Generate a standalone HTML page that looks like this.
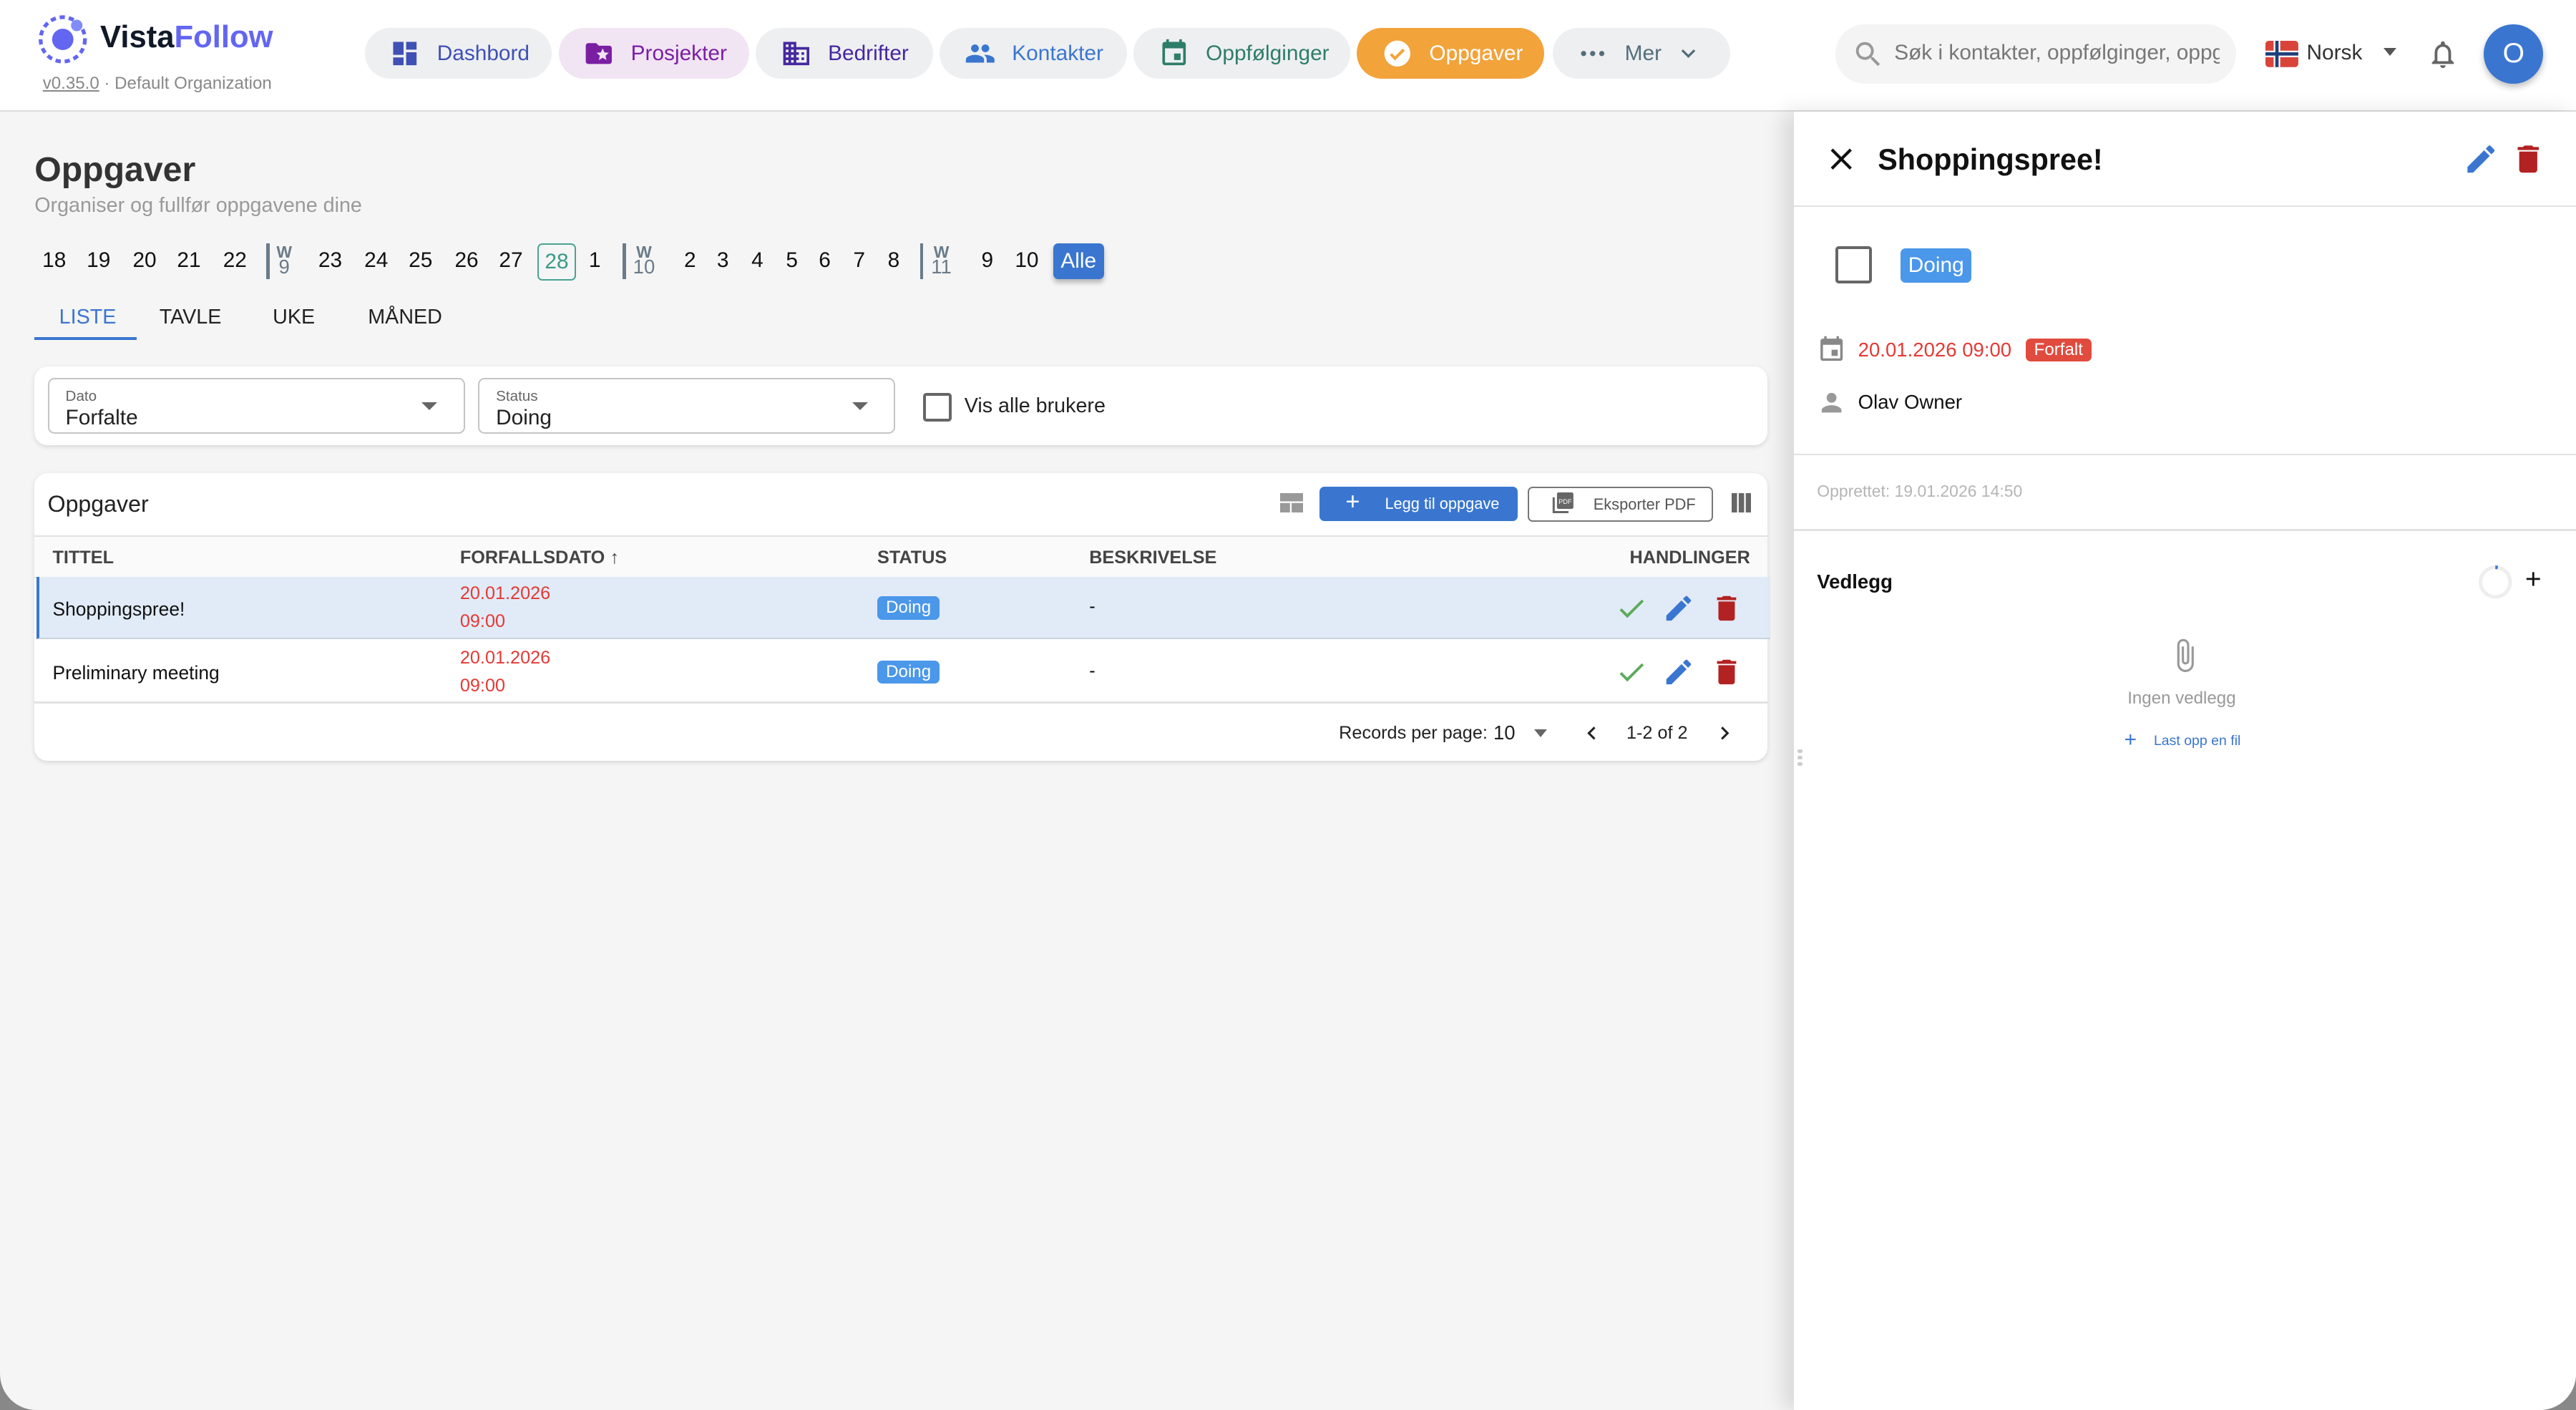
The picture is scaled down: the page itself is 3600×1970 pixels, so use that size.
<!DOCTYPE html>
<html><head><meta charset="utf-8">
<style>
html{zoom:2.29592}
body{margin:0;width:1568px;height:858px;background:#888;overflow:hidden;font-family:"Liberation Sans",Arial,sans-serif;}
#root{position:relative;width:1568px;height:858px;background:#f5f5f5;border-radius:0 0 22px 22px;overflow:hidden}
.a{position:absolute}
.hdr{left:0;top:0;width:1568px;height:67px;background:#fff;border-bottom:1px solid #ddd}
.pill{position:absolute;top:17px;height:31px;border-radius:16px;background:#eeeff1;display:flex;align-items:center;font-size:13px}
.pill svg{width:19px;height:19px;margin:0 10px 0 15px}
.c{transform:translateX(-50%);font-size:13px;color:#111;top:151px}
.w{transform:translateX(-50%);color:#6a7b89;font-size:10px;line-height:9px;text-align:center;top:149px;font-weight:bold}
.sep{top:148px;width:2px;height:22px;background:#6a7b89}
.card{background:#fff;border-radius:8px;box-shadow:0 1px 3px rgba(0,0,0,.12)}
.sel{top:230px;height:34px;width:254px;border:1px solid #c4c4c4;border-radius:4px;background:#fff;box-sizing:border-box}
.sel .l{position:absolute;left:10px;top:5px;font-size:9px;color:#666}
.sel .v{position:absolute;left:10px;top:16px;font-size:13px;color:#222}
.sel .ar{position:absolute;right:16px;top:14px;width:0;height:0;border-left:5px solid transparent;border-right:5px solid transparent;border-top:5px solid #666}
.th{top:333px;font-size:11px;font-weight:bold;color:#444}
.badge{position:absolute;left:534px;width:38px;height:14px;background:#4b97ea;color:#fff;font-size:10.5px;border-radius:3px;text-align:center;line-height:14px}
.red{color:#e53935;font-size:11px}
.hl{left:1092px;height:1px;width:476px;background:#e2e2e2}
</style></head><body><div id="root">
<div class="a hdr"></div>
<svg class="a" style="left:22px;top:7px" width="34" height="34" viewBox="0 0 34 34"><circle cx="16" cy="17" r="13.5" fill="none" stroke="#6366f1" stroke-width="2.3" stroke-dasharray="3.2 2.4"/><circle cx="16" cy="17" r="6.5" fill="#6366f1"/><circle cx="24.5" cy="8.5" r="3.5" fill="#818cf8"/></svg>
<div class="a" style="left:61px;top:12px;font-size:19px;font-weight:bold;color:#111827">Vista<span style="color:#6366f1">Follow</span></div>
<div class="a" style="left:26px;top:45px;font-size:10.5px;color:#888"><span style="text-decoration:underline">v0.35.0</span> · Default Organization</div>

<div class="pill" style="left:222px;width:114px;color:#3f51b5"><svg viewBox="0 0 24 24" fill="#3f51b5"><path d="M3 13h8V3H3v10zm0 8h8v-6H3v6zm10 0h8V11h-8v10zm0-18v6h8V3h-8z"/></svg>Dashbord</div>
<div class="pill" style="left:340px;width:116px;background:#f1e4f3;color:#7b1fa2"><svg viewBox="0 0 24 24" fill="#7b1fa2"><path d="M20 6h-8l-2-2H4c-1.1 0-2 .9-2 2v12c0 1.1.9 2 2 2h16c1.1 0 2-.9 2-2V8c0-1.1-.9-2-2-2zm-2.06 11L15 15.280 12.06 17l.78-3.33-2.59-2.24 3.41-.29L15 8l1.34 3.14 3.41.29-2.59 2.24.78 3.33z"/></svg>Prosjekter</div>
<div class="pill" style="left:460px;width:108px;color:#4527a0"><svg viewBox="0 0 24 24" fill="#4527a0"><path d="M12 7V3H2v18h20V7H12zM6 19H4v-2h2v2zm0-4H4v-2h2v2zm0-4H4V9h2v2zm0-4H4V5h2v2zm4 12H8v-2h2v2zm0-4H8v-2h2v2zm0-4H8V9h2v2zm0-4H8V5h2v2zm10 12h-8v-2h2v-2h-2v-2h2v-2h-2V9h8v10zm-2-8h-2v2h2v-2zm0 4h-2v2h2v-2z"/></svg>Bedrifter</div>
<div class="pill" style="left:572px;width:114px;color:#3a76d0"><svg viewBox="0 0 24 24" fill="#3a76d0"><path d="M16 11c1.66 0 2.99-1.34 2.99-3S17.66 5 16 5c-1.660 0-3 1.34-3 3s1.34 3 3 3zm-8 0c1.66 0 2.99-1.34 2.99-3S9.66 5 8 5C6.34 5 5 6.34 5 8s1.34 3 3 3zm0 2c-2.33 0-7 1.17-7 3.5V19h14v-2.5c0-2.33-4.67-3.5-7-3.5zm8 0c-.29 0-.62.02-.97.05 1.16.84 1.97 1.97 1.97 3.45V19h6v-2.5c0-2.33-4.67-3.5-7-3.5z"/></svg>Kontakter</div>
<div class="pill" style="left:690px;width:132px;color:#2e7d68"><svg viewBox="0 0 24 24" fill="#2e7d68"><path d="M17 12h-5v5h5v-5zM16 1v2H8V1H6v2H5c-1.11 0-1.99.9-1.99 2L3 19c0 1.1.89 2 2 2h14c1.1 0 2-.9 2-2V5c0-1.1-.9-2-2-2h-1V1h-2zm3 18H5V8h14v11z"/></svg>Oppfølginger</div>
<div class="pill" style="left:826px;width:114px;background:#f2a33a;color:#fff"><svg viewBox="0 0 24 24"><circle cx="12" cy="12" r="10" fill="#fff"/><path d="M7 12.5l3.2 3.2L17 9" fill="none" stroke="#f2a33a" stroke-width="2.2"/></svg>Oppgaver</div>
<div class="pill" style="left:945px;width:108px;color:#546e7a"><svg viewBox="0 0 24 24" fill="#546e7a"><circle cx="5" cy="12" r="2"/><circle cx="12" cy="12" r="2"/><circle cx="19" cy="12" r="2"/></svg>Mer<svg viewBox="0 0 24 24" style="width:17px;height:17px;margin-left:8px" fill="#546e7a"><path d="M7.41 8.59L12 13.17l4.59-4.58L18 10l-6 6-6-6z"/></svg></div>

<div class="a" style="left:1117px;top:15px;width:244px;height:36px;border-radius:18px;background:#f4f4f4"></div>
<svg class="a" style="left:1127px;top:23px" width="20" height="20" viewBox="0 0 24 24" fill="#999"><path d="M15.5 14h-.79l-.28-.27A6.47 6.47 0 0016 9.5 6.5 6.5 0 109.5 16c1.61 0 3.09-.59 4.23-1.57l.27.28v.79l5 4.99L20.49 19l-4.99-5zm-6 0C7.01 14 5 11.99 5 9.5S7.01 5 9.5 5 14 7.01 14 9.5 11.99 14 9.5 14z"/></svg>
<div class="a" style="left:1153px;top:25px;font-size:13px;color:#777;width:198px;overflow:hidden;white-space:nowrap">Søk i kontakter, oppfølginger, oppgaver</div>
<svg class="a" style="left:1379px;top:25px" width="20" height="16" viewBox="0 0 20 16"><rect width="20" height="16" rx="2" fill="#d9443a"/><rect x="5" width="4" height="16" fill="#fff"/><rect y="6" width="20" height="4" fill="#fff"/><rect x="6" width="2" height="16" fill="#1f3d7a"/><rect y="7" width="20" height="2" fill="#1f3d7a"/></svg>
<div class="a" style="left:1404px;top:25px;font-size:13px;color:#333">Norsk</div>
<div class="a" style="left:1451px;top:29px;border-left:4px solid transparent;border-right:4px solid transparent;border-top:5px solid #555"></div>
<svg class="a" style="left:1477px;top:23px" width="20" height="20" viewBox="0 0 24 24" fill="#666"><path d="M12 22c1.1 0 2-.9 2-2h-4c0 1.1.9 2 2 2zm6-6v-5c0-3.07-1.64-5.64-4.5-6.32V4c0-.83-.67-1.5-1.5-1.5s-1.5.67-1.5 1.5v.68C7.63 5.36 6 7.92 6 11v5l-2 2v1h16v-1l-2-2zm-2 1H8v-6c0-2.48 1.51-4.5 4-4.5s4 2.02 4 4.5v6z"/></svg>
<div class="a" style="left:1512px;top:15px;width:36px;height:36px;border-radius:50%;background:#3a76d0;color:#fff;font-size:17px;text-align:center;line-height:36px;box-shadow:0 2px 4px rgba(0,0,0,.25)">O</div>

<div class="a" style="left:21px;top:91px;font-size:21px;font-weight:bold;color:#333">Oppgaver</div>
<div class="a" style="left:21px;top:118px;font-size:12.5px;color:#9a9a9a">Organiser og fullfør oppgavene dine</div>

<div class="a c" style="left:33px">18</div><div class="a c" style="left:60px">19</div><div class="a c" style="left:88px">20</div><div class="a c" style="left:115px">21</div><div class="a c" style="left:143px">22</div>
<div class="a sep" style="left:162px"></div><div class="a w" style="left:173px">W<br><span style="font-size:12px;font-weight:normal">9</span></div>
<div class="a c" style="left:201px">23</div><div class="a c" style="left:229px">24</div><div class="a c" style="left:256px">25</div><div class="a c" style="left:284px">26</div><div class="a c" style="left:311px">27</div>
<div class="a" style="left:327px;top:148px;width:22px;height:21px;border:1px solid #4aa393;border-radius:3px;color:#3a9a88;font-size:13px;text-align:center;line-height:21px">28</div>
<div class="a c" style="left:362px">1</div>
<div class="a sep" style="left:379px"></div><div class="a w" style="left:392px">W<br><span style="font-size:12px;font-weight:normal">10</span></div>
<div class="a c" style="left:420px">2</div><div class="a c" style="left:440px">3</div><div class="a c" style="left:461px">4</div><div class="a c" style="left:482px">5</div><div class="a c" style="left:502px">6</div><div class="a c" style="left:523px">7</div><div class="a c" style="left:544px">8</div>
<div class="a sep" style="left:560px"></div><div class="a w" style="left:573px">W<br><span style="font-size:12px;font-weight:normal">11</span></div>
<div class="a c" style="left:601px">9</div><div class="a c" style="left:625px">10</div>
<div class="a" style="left:641px;top:148px;width:31px;height:22px;background:#3a76d0;border-radius:3px;color:#fff;font-size:13px;text-align:center;line-height:22px;box-shadow:0 2px 3px rgba(0,0,0,.25)">Alle</div>

<div class="a" style="left:36px;top:186px;font-size:12.5px;color:#3a76d0">LISTE</div>
<div class="a" style="left:97px;top:186px;font-size:12.5px;color:#222">TAVLE</div>
<div class="a" style="left:166px;top:186px;font-size:12.5px;color:#222">UKE</div>
<div class="a" style="left:224px;top:186px;font-size:12.5px;color:#222">MÅNED</div>
<div class="a" style="left:21px;top:205px;width:62px;height:2px;background:#3a76d0"></div>

<div class="a card" style="left:21px;top:223px;width:1055px;height:48px"></div>
<div class="a sel" style="left:29px"><span class="l">Dato</span><span class="v">Forfalte</span><span class="ar"></span></div>
<div class="a sel" style="left:291px"><span class="l">Status</span><span class="v">Doing</span><span class="ar"></span></div>
<div class="a" style="left:562px;top:239px;width:14px;height:14px;border:2px solid #666;border-radius:2px"></div>
<div class="a" style="left:587px;top:240px;font-size:12.5px;color:#222">Vis alle brukere</div>

<div class="a card" style="left:21px;top:288px;width:1055px;height:175px"></div>
<div class="a" style="left:29px;top:299px;font-size:14px;color:#222">Oppgaver</div>
<svg class="a" style="left:779px;top:300px" width="14" height="12" viewBox="0 0 14 12" fill="#999"><rect width="14" height="5"/><rect y="6" width="6" height="6"/><rect x="7" y="6" width="7" height="6"/></svg>
<div class="a" style="left:803px;top:296px;width:121px;height:21px;background:#3a76d0;border-radius:3px;color:#fff;font-size:9.5px;line-height:21px"><span style="font-size:15px;position:absolute;left:16px;top:-1px">+</span><span style="position:absolute;left:40px">Legg til oppgave</span></div>
<div class="a" style="left:930px;top:296px;width:111px;height:20px;border:1px solid #777;border-radius:3px;color:#555;font-size:9.5px;line-height:20px"><svg style="position:absolute;left:14px;top:3px" width="13" height="13" viewBox="0 0 13 13"><rect x="3" y="0" width="10" height="10" rx="1" fill="#666"/><path d="M1 3v9h9" fill="none" stroke="#666" stroke-width="1.3"/><text x="4" y="7" font-size="4" fill="#fff" font-family="Liberation Sans">PDF</text></svg><span style="position:absolute;left:39px">Eksporter PDF</span></div>
<svg class="a" style="left:1054px;top:300px" width="12" height="12" viewBox="0 0 12 12" fill="#666"><rect width="3.3" height="12"/><rect x="4.3" width="3.3" height="12"/><rect x="8.6" width="3.4" height="12"/></svg>
<div class="a" style="left:21px;top:326px;width:1055px;height:24px;background:#fafafa;border-top:1px solid #e2e2e2;border-bottom:1px solid #e2e2e2"></div>
<div class="a th" style="left:32px">TITTEL</div>
<div class="a th" style="left:280px">FORFALLSDATO <span style="font-weight:normal">↑</span></div>
<div class="a th" style="left:534px">STATUS</div>
<div class="a th" style="left:663px">BESKRIVELSE</div>
<div class="a th" style="left:992px">HANDLINGER</div>

<div class="a" style="left:22px;top:351px;width:1054px;height:37px;background:#e1ebf7;border-left:2px solid #3a76d0;border-bottom:1px solid #c9d3e0"></div>
<div class="a" style="left:21px;top:427px;width:1055px;height:1px;background:#e2e2e2"></div>
<div class="a" style="left:32px;top:364px;font-size:11.5px;color:#111">Shoppingspree!</div>
<div class="a red" style="left:280px;top:355px">20.01.2026</div><div class="a red" style="left:280px;top:372px">09:00</div>
<div class="badge" style="top:363px">Doing</div>
<div class="a" style="left:663px;top:363px;font-size:11px">-</div>
<div class="a" style="left:32px;top:403px;font-size:11.5px;color:#111">Preliminary meeting</div>
<div class="a red" style="left:280px;top:394px">20.01.2026</div><div class="a red" style="left:280px;top:411px">09:00</div>
<div class="badge" style="top:402px">Doing</div>
<div class="a" style="left:663px;top:402px;font-size:11px">-</div>

<svg class="a" style="left:983px;top:360px" width="20" height="20" viewBox="0 0 24 24" fill="#5cab5a"><path d="M9 16.17L4.83 12l-1.42 1.41L9 19 21 7l-1.41-1.41z"/></svg>
<svg class="a" style="left:1012px;top:360px" width="20" height="20" viewBox="0 0 24 24" fill="#3a76d0"><path d="M3 17.25V21h3.75L17.81 9.94l-3.75-3.75L3 17.25zM20.71 7.04a1 1 0 000-1.41l-2.34-2.34a1 1 0 00-1.41 0l-1.83 1.83 3.75 3.75 1.83-1.830z"/></svg>
<svg class="a" style="left:1041px;top:360px" width="20" height="20" viewBox="0 0 24 24" fill="#b22222"><path d="M6 19c0 1.1.9 2 2 2h8c1.1 0 2-.9 2-2V7H6v12zM19 4h-3.5l-1-1h-5l-1 1H5v2h14V4z"/></svg>
<svg class="a" style="left:983px;top:399px" width="20" height="20" viewBox="0 0 24 24" fill="#5cab5a"><path d="M9 16.17L4.83 12l-1.42 1.41L9 19 21 7l-1.41-1.41z"/></svg>
<svg class="a" style="left:1012px;top:399px" width="20" height="20" viewBox="0 0 24 24" fill="#3a76d0"><path d="M3 17.25V21h3.75L17.81 9.94l-3.75-3.75L3 17.25zM20.71 7.04a1 1 0 000-1.41l-2.34-2.34a1 1 0 00-1.41 0l-1.83 1.83 3.75 3.75 1.83-1.83z"/></svg>
<svg class="a" style="left:1041px;top:399px" width="20" height="20" viewBox="0 0 24 24" fill="#b22222"><path d="M6 19c0 1.1.9 2 2 2h8c1.1 0 2-.9 2-2V7H6v12zM19 4h-3.5l-1-1h-5l-1 1H5v2h14V4z"/></svg>

<div class="a" style="left:815px;top:440px;font-size:11px;color:#222">Records per page:</div>
<div class="a" style="left:909px;top:439px;font-size:12px;color:#222">10</div>
<div class="a" style="left:934px;top:444px;border-left:4px solid transparent;border-right:4px solid transparent;border-top:5px solid #666"></div>
<svg class="a" style="left:961px;top:438px" width="16" height="16" viewBox="0 0 24 24" fill="#222"><path d="M15.41 7.41L14 6l-6 6 6 6 1.41-1.41L10.83 12z"/></svg>
<div class="a" style="left:990px;top:440px;font-size:11px;color:#222">1-2 of 2</div>
<svg class="a" style="left:1042px;top:438px" width="16" height="16" viewBox="0 0 24 24" fill="#222"><path d="M10 6L8.59 7.41 13.17 12l-4.58 4.59L10 18l6-6z"/></svg>

<div class="a" style="left:1092px;top:68px;width:476px;height:790px;background:#fff;box-shadow:-6px 0 12px rgba(0,0,0,.12)"></div>
<svg class="a" style="left:1110px;top:86px" width="22" height="22" viewBox="0 0 24 24" fill="#111"><path d="M19 6.41L17.59 5 12 10.59 6.41 5 5 6.41 10.59 12 5 17.59 6.41 19 12 13.41 17.59 19 19 17.59 13.41 12z"/></svg>
<div class="a" style="left:1143px;top:87px;font-size:18px;font-weight:bold;color:#111">Shoppingspree!</div>
<svg class="a" style="left:1499px;top:86px" width="22" height="22" viewBox="0 0 24 24" fill="#3a76d0"><path d="M3 17.25V21h3.75L17.81 9.94l-3.75-3.75L3 17.25zM20.71 7.04a1 1 0 000-1.41l-2.34-2.34a1 1 0 00-1.41 0l-1.83 1.83 3.75 3.75 1.83-1.83z"/></svg>
<svg class="a" style="left:1528px;top:86px" width="22" height="22" viewBox="0 0 24 24" fill="#b22222"><path d="M6 19c0 1.1.9 2 2 2h8c1.1 0 2-.9 2-2V7H6v12zM19 4h-3.5l-1-1h-5l-1 1H5v2h14V4z"/></svg>
<div class="a hl" style="top:125px"></div>
<div class="a" style="left:1117px;top:150px;width:19px;height:19px;border:2px solid #666;border-radius:2px"></div>
<div class="a" style="left:1157px;top:151px;width:43px;height:21px;background:#4b97ea;border-radius:3px;color:#fff;font-size:13px;text-align:center;line-height:21px">Doing</div>
<svg class="a" style="left:1106px;top:204px" width="18" height="18" viewBox="0 0 24 24" fill="#888"><path d="M17 12h-5v5h5v-5zM16 1v2H8V1H6v2H5c-1.11 0-1.99.9-1.99 2L3 19c0 1.1.89 2 2 2h14c1.1 0 2-.9 2-2V5c0-1.1-.9-2-2-2h-1V1h-2zm3 18H5V8h14v11z"/></svg>
<div class="a" style="left:1131px;top:206px;font-size:12px;color:#e53935">20.01.2026 09:00</div>
<div class="a" style="left:1233px;top:206px;width:40px;height:14px;background:#e04b3e;border-radius:3px;color:#fff;font-size:10.5px;text-align:center;line-height:14px">Forfalt</div>
<svg class="a" style="left:1106px;top:236px" width="18" height="18" viewBox="0 0 24 24" fill="#999"><path d="M12 12c2.21 0 4-1.79 4-4s-1.790-4-4-4-4 1.79-4 4 1.79 4 4 4zm0 2c-2.67 0-8 1.34-8 4v2h16v-2c0-2.66-5.33-4-8-4z"/></svg>
<div class="a" style="left:1131px;top:238px;font-size:12px;color:#111">Olav Owner</div>
<div class="a hl" style="top:276px"></div>
<div class="a" style="left:1106px;top:293px;font-size:10px;color:#b5b5b5">Opprettet: 19.01.2026 14:50</div>
<div class="a hl" style="top:322px"></div>
<div class="a" style="left:1106px;top:347px;font-size:12px;font-weight:bold;color:#111">Vedlegg</div>
<svg class="a" style="left:1508px;top:343px" width="22" height="22" viewBox="0 0 22 22"><circle cx="11" cy="11" r="9" fill="none" stroke="#eee" stroke-width="2.2"/><path d="M11 2a9 9 0 0 1 1.5 .1" fill="none" stroke="#3a76d0" stroke-width="2.2"/></svg>
<div class="a" style="left:1537px;top:343px;font-size:17px;color:#111">+</div>
<svg class="a" style="left:1319px;top:386px" width="22" height="26" viewBox="0 0 24 24" fill="#999"><path d="M16.5 6v11.5c0 2.21-1.79 4-4 4s-4-1.79-4-4V5a2.5 2.5 0 015 0v10.5c0 .55-.45 1-1 1s-1-.45-1-1V6H10v9.5a2.5 2.5 0 005 0V5c0-2.21-1.79-4-4-4S7 2.79 7 5v12.5c0 3.04 2.46 5.5 5.5 5.5s5.5-2.46 5.5-5.5V6h-1.5z"/></svg>
<div class="a" style="left:1295px;top:419px;font-size:10.5px;color:#999">Ingen vedlegg</div>
<div class="a" style="left:1293px;top:443px;font-size:13px;color:#3a76d0">+</div>
<div class="a" style="left:1311px;top:446px;font-size:8.5px;color:#3a76d0">Last opp en fil</div>
<div class="a" style="left:1094px;top:456px;width:3px;font-size:0">
<div style="width:3px;height:2px;background:#ccc;border-radius:1px;margin-bottom:2px"></div><div style="width:3px;height:2px;background:#ccc;border-radius:1px;margin-bottom:2px"></div><div style="width:3px;height:2px;background:#ccc;border-radius:1px"></div></div>
</div></body></html>
